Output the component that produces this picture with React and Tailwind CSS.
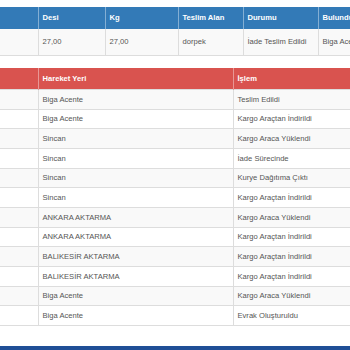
const shipment = { desi: "27,00", kg: "27,00", alan: "dorpek", durum: "İade Teslim Edildi", yer: "Biga Acente" };

const moves = [
  ["Biga Acente", "Teslim Edildi"],
  ["Biga Acente", "Kargo Araçtan İndirildi"],
  ["Sincan", "Kargo Araca Yüklendi"],
  ["Sincan", "İade Sürecinde"],
  ["Sincan", "Kurye Dağıtıma Çıktı"],
  ["Sincan", "Kargo Araçtan İndirildi"],
  ["ANKARA AKTARMA", "Kargo Araca Yüklendi"],
  ["ANKARA AKTARMA", "Kargo Araçtan İndirildi"],
  ["BALIKESİR AKTARMA", "Kargo Araçtan İndirildi"],
  ["BALIKESİR AKTARMA", "Kargo Araçtan İndirildi"],
  ["Biga Acente", "Kargo Araca Yüklendi"],
  ["Biga Acente", "Evrak Oluşturuldu"],
];

const th = "text-left font-bold text-white px-[4px] border-l border-white/40 first:border-l-0";
const td = "text-left text-[#555] px-[4px] border-l border-[#ddd] first:border-l-0";

export default function App() {
  return (
    <div className="w-[350px] h-[350px] overflow-hidden bg-white flex flex-col text-[7.6px] font-['Liberation_Sans',Arial,sans-serif]">
      <div className="pt-[7px] overflow-hidden">
        {/* Gönderi bilgisi */}
        <table className="table-fixed border-collapse w-[400px]">
          <colgroup>
            <col className="w-[38px]" />
            <col className="w-[67px]" />
            <col className="w-[73px]" />
            <col className="w-[65px]" />
            <col className="w-[75px]" />
            <col className="w-[82px]" />
          </colgroup>
          <thead>
            <tr className="bg-[#337ab7] h-[22px]">
              <th className={th}></th>
              <th className={th}>Desi</th>
              <th className={th}>Kg</th>
              <th className={th}>Teslim Alan</th>
              <th className={th}>Durumu</th>
              <th className={th}>Bulunduğu Yer</th>
            </tr>
          </thead>
          <tbody>
            <tr className="bg-[#f9f9f9] h-[26px] border-b border-[#ddd]">
              <td className={td}></td>
              <td className={td}>{shipment.desi}</td>
              <td className={td}>{shipment.kg}</td>
              <td className={td}>{shipment.alan}</td>
              <td className={td}>{shipment.durum}</td>
              <td className={td}>{shipment.yer}</td>
            </tr>
          </tbody>
        </table>
      </div>

      {/* Hareketler */}
      <div className="mt-[12px] overflow-hidden">
        <table className="table-fixed border-collapse w-[380px]">
          <colgroup>
            <col className="w-[38px]" />
            <col className="w-[195px]" />
            <col className="w-[147px]" />
          </colgroup>
          <thead>
            <tr className="bg-[#d9534f] h-[22px]">
              <th className={th}></th>
              <th className={th}>Hareket Yeri</th>
              <th className={th}>İşlem</th>
            </tr>
          </thead>
          <tbody>
            {moves.map(([yer, islem], i) => (
              <tr key={i} className={`h-[19.67px] border-t border-[#ddd] ${i % 2 === 0 ? "bg-[#f9f9f9]" : "bg-white"}`}>
                <td className={td}></td>
                <td className={td}>{yer}</td>
                <td className={td}>{islem}</td>
              </tr>
            ))}
            <tr className="border-t border-[#ddd]"><td colSpan={3}></td></tr>
          </tbody>
        </table>
      </div>

      <div className="flex-1" />
      <div className="h-[4px] bg-[#1f4f96]" />
    </div>
  );
}
